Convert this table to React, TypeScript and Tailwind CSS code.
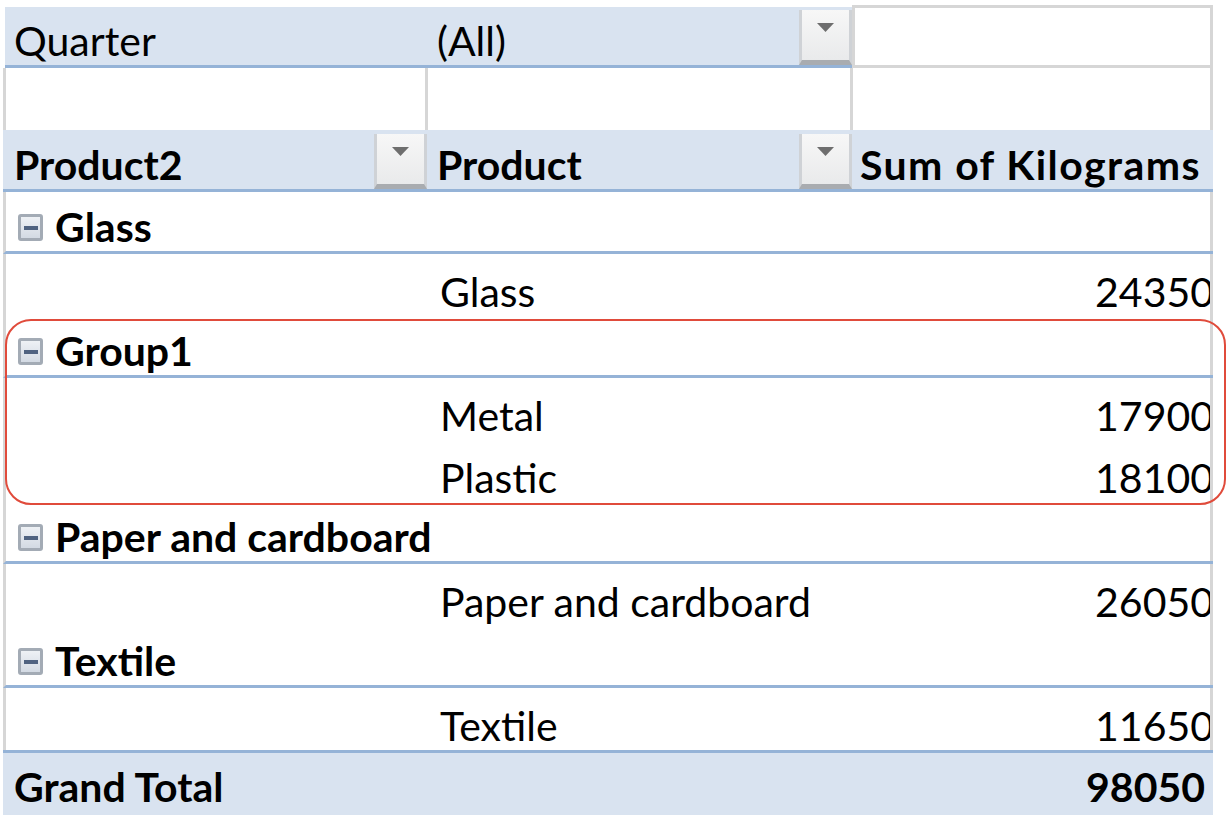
import React from "react";

const Dropdown = () => (
  <div className="flex h-[55px] w-[53px] shrink-0 flex-col self-end border-x-[3px] border-b-[5px] border-x-[#cfd2d6] border-b-[#a9acb0] bg-gradient-to-b from-[#f7f7f7] to-[#e9eaeb]">
    <div className="mt-[13px] flex justify-center">
      <svg width="17" height="9" viewBox="0 0 17 9">
        <path d="M0 0 H17 L8.5 9 Z" fill="#6e6e6e" />
      </svg>
    </div>
  </div>
);

const MinusBox = () => (
  <div className="mr-[12px] mb-[10px] flex h-[27px] w-[25px] shrink-0 items-center justify-center rounded-[3px] border-[3px] border-[#a3abb5] bg-gradient-to-b from-[#eef1f5] to-[#d3dae3]">
    <div className="h-[4px] w-[14px] bg-[#4f6280]" />
  </div>
);

type Row =
  | { kind: "group"; label: string }
  | { kind: "item"; label: string; value: string };

const rows: Row[] = [
  { kind: "group", label: "Glass" },
  { kind: "item", label: "Glass", value: "24350" },
  { kind: "group", label: "Group1" },
  { kind: "item", label: "Metal", value: "17900" },
  { kind: "item", label: "Plastic", value: "18100" },
  { kind: "group", label: "Paper and cardboard" },
  { kind: "item", label: "Paper and cardboard", value: "26050" },
  { kind: "group", label: "Textile" },
  { kind: "item", label: "Textile", value: "11650" },
];

export default function App() {
  return (
    <div
      className="h-[821px] w-[1229px] overflow-hidden bg-white text-black"
      style={{ fontFamily: "Lato, 'Open Sans', sans-serif" }}
    >
      <div className="relative ml-[3px] mt-[5px] w-[1210px] text-[41px] leading-none">
        {/* Quarter filter row */}
        <div className="flex h-[63px] pl-[2px]">
          <div className="mt-[2px] flex w-[847px] border-b-[3px] border-[#95b3d7] bg-[#d9e3f0]">
            <div className="flex w-[422px] items-end pb-[4px] pl-[9px]">Quarter</div>
            <div className="flex flex-1 items-end justify-between pl-[10px]">
              <span className="pb-[4px]">(All)</span>
              <Dropdown />
            </div>
          </div>
          <div className="flex-1 border-x-[3px] border-y-[3px] border-[#d6d6d6]" />
        </div>

        {/* empty row */}
        <div className="flex h-[62px] border-l-[3px] border-[#d6d6d6]">
          <div className="w-[422px] border-r-[3px] border-[#d6d6d6]" />
          <div className="w-[425px] border-r-[3px] border-[#d6d6d6]" />
          <div className="flex-1 border-r-[3px] border-[#d6d6d6]" />
        </div>

        {/* header row */}
        <div className="flex h-[62px] border-b-[3px] border-[#95b3d7] bg-[#d9e3f0] pl-[2px] font-bold">
          <div className="flex w-[422px] items-end justify-between pl-[9px]">
            <span className="pb-[4px]">Product2</span>
            <Dropdown />
          </div>
          <div className="flex w-[425px] items-end justify-between pl-[10px]">
            <span className="pb-[4px]">Product</span>
            <Dropdown />
          </div>
          <div className="flex flex-1 items-end pb-[4px] pl-[8px] tracking-[1.4px] whitespace-nowrap">Sum of Kilograms</div>
        </div>

        {rows.map((r, i) =>
          r.kind === "group" ? (
            <div
              key={i}
              className="flex h-[62px] items-end border-b-[3px] border-l-[3px] border-b-[#95b3d7] border-l-[#d6d6d6] pl-[12px] font-bold"
            >
              <MinusBox />
              <span className="whitespace-nowrap pb-[4px]">{r.label}</span>
              <div className="ml-auto h-full w-[3px] bg-[#d6d6d6]" />
            </div>
          ) : (
            <div key={i} className="flex h-[62px] border-l-[3px] border-[#d6d6d6]">
              <div className="w-[424px]" />
              <div className="flex w-[425px] items-end pb-[4px] pl-[10px] whitespace-nowrap">{r.label}</div>
              <div className="flex flex-1 items-end justify-end overflow-hidden border-r-[3px] border-[#d6d6d6] pb-[4px]">
                <span className="-mr-[4px]">{r.value}</span>
              </div>
            </div>
          )
        )}

        {/* grand total */}
        <div className="flex h-[65px] border-t-[3px] border-[#95b3d7] bg-[#d9e3f0] pl-[2px] font-bold">
          <div className="flex w-[422px] items-end pb-[8px] pl-[9px]">Grand Total</div>
          <div className="w-[425px]" />
          <div className="flex flex-1 items-end justify-end pb-[8px] pr-[8px]">98050</div>
        </div>

        {/* annotation */}
        <div className="pointer-events-none absolute left-[2px] top-[314px] h-[186px] w-[1221px] rounded-[26px] border-2 border-[#e04b3b]" />
      </div>
    </div>
  );
}
